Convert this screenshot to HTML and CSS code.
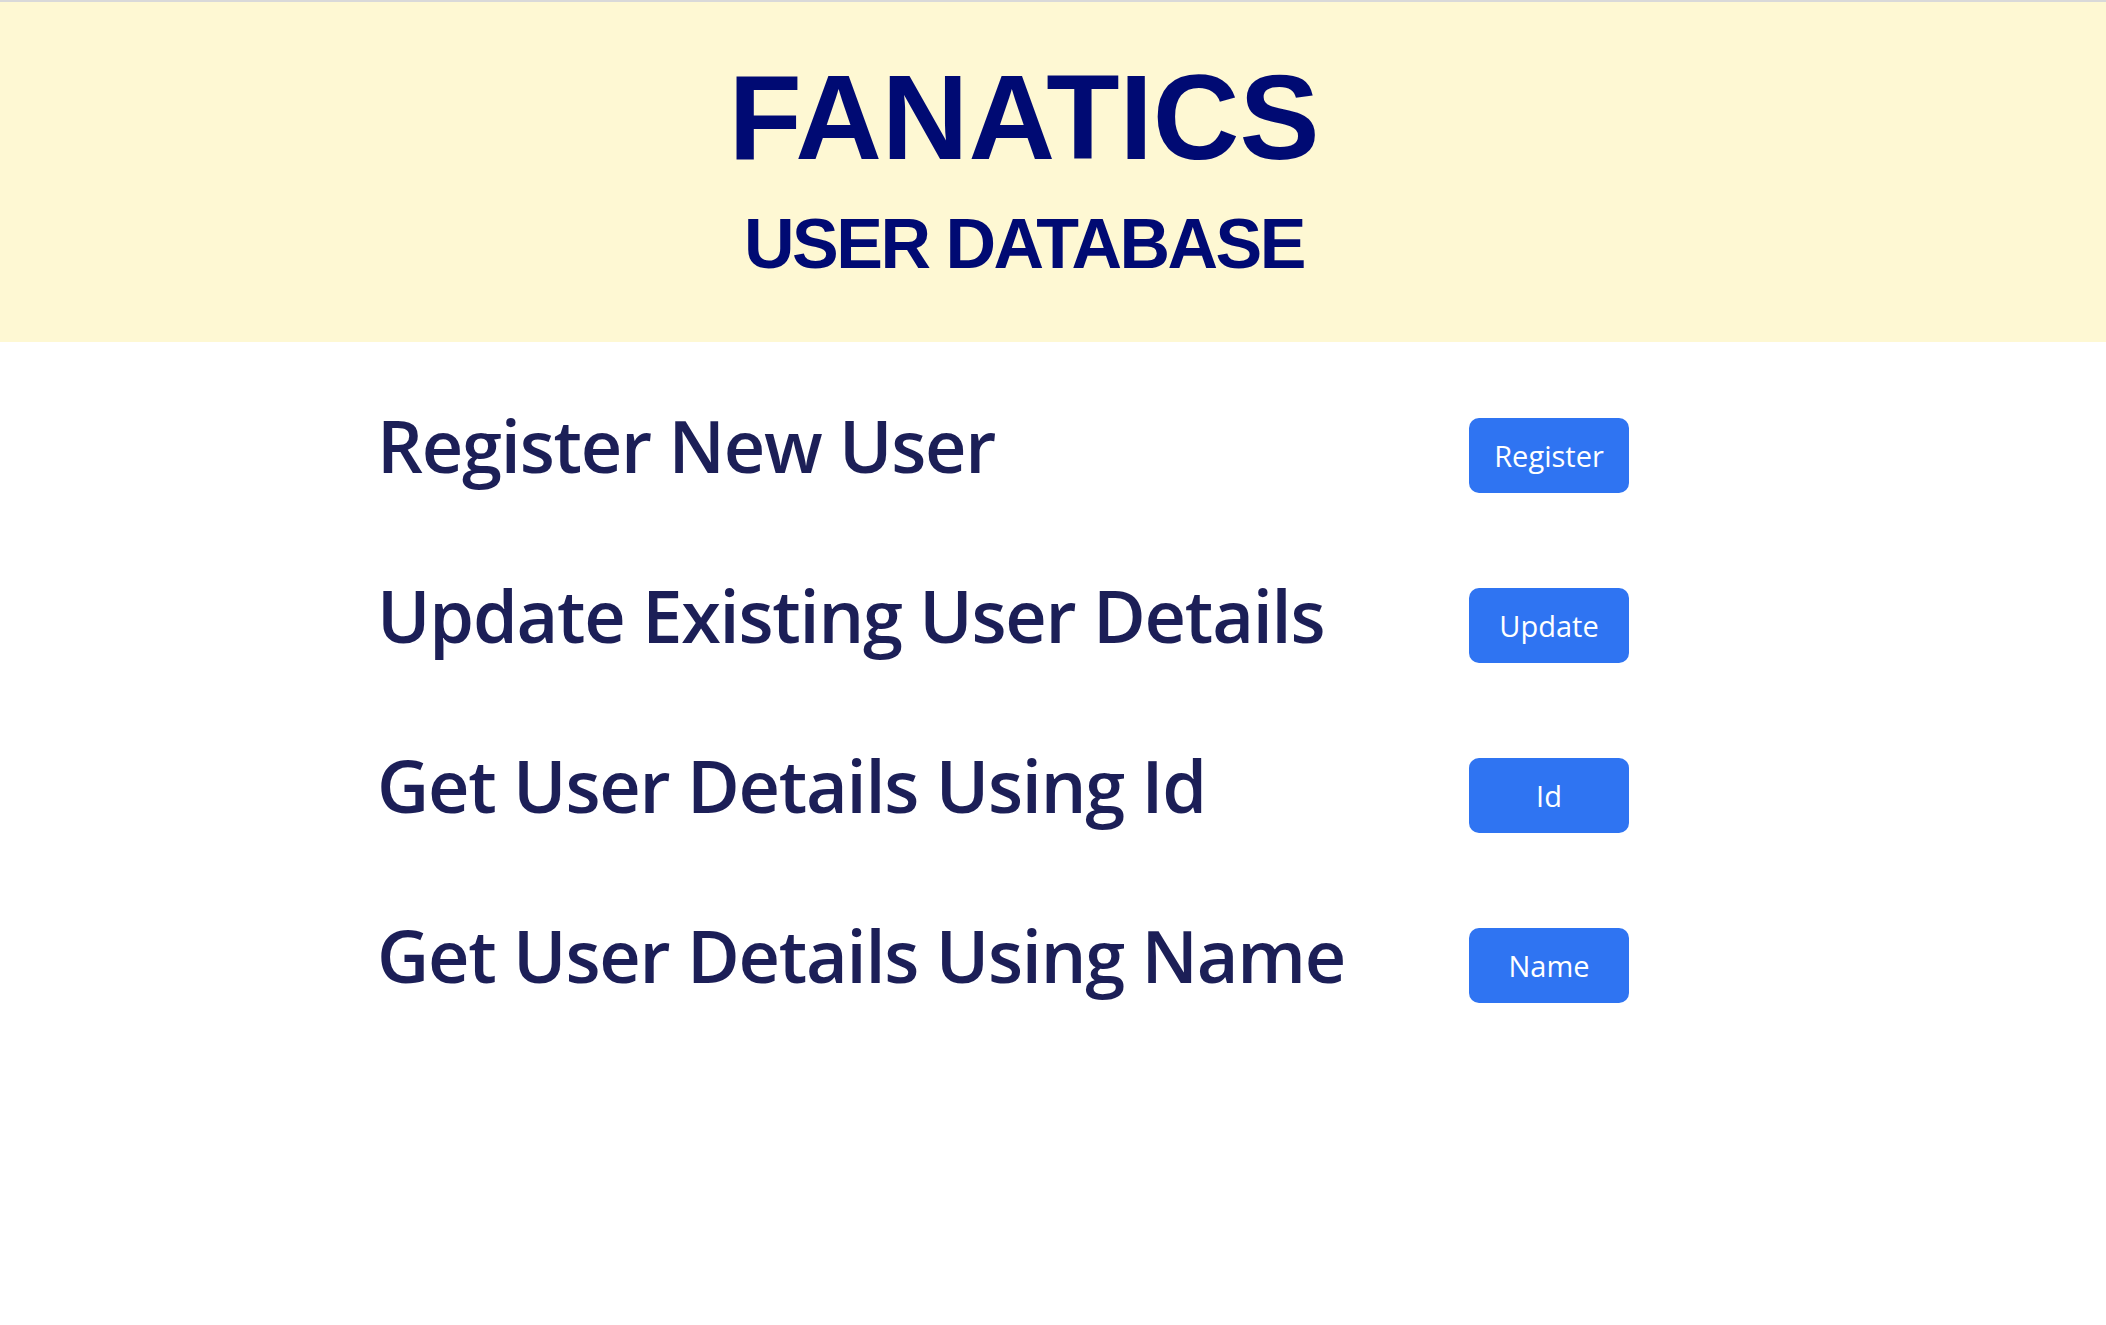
FILE: index.html
```html
<!DOCTYPE html>
<html lang="en">
<head>
<meta charset="utf-8">
<title>Fanatics - User Database</title>
<link rel="stylesheet" href="styles.css">
</head>
<body>
<header class="banner">
  <h1 class="brand">FANATICS</h1>
  <h2 class="subtitle">USER DATABASE</h2>
</header>
<main class="actions">
  <div class="action-row">
    <span class="action-label">Register New User</span>
    <button class="action-btn">Register</button>
  </div>
  <div class="action-row">
    <span class="action-label">Update Existing User Details</span>
    <button class="action-btn">Update</button>
  </div>
  <div class="action-row">
    <span class="action-label">Get User Details Using Id</span>
    <button class="action-btn">Id</button>
  </div>
  <div class="action-row">
    <span class="action-label">Get User Details Using Name</span>
    <button class="action-btn">Name</button>
  </div>
</main>
</body>
</html>
```

FILE: styles.css
```css
html, body {
  margin: 0;
  padding: 0;
  background: #ffffff;
}

body {
  border-top: 2px solid #d9d9d9;
  font-family: "Open Sans", "Liberation Sans", sans-serif;
}

.banner {
  background: #fef8d3;
  height: 340px;
  box-sizing: border-box;
  display: flex;
  flex-direction: column;
  align-items: center;
  padding-right: 58px;
  padding-top: 50px;
}

.brand {
  margin: 0;
  font-family: "Liberation Sans", Arial, sans-serif;
  font-weight: 700;
  font-size: 120px;
  line-height: 130px;
  letter-spacing: 0;
  color: #000a73;
}

.subtitle {
  margin: 0;
  margin-top: 22px;
  font-family: "Liberation Sans", Arial, sans-serif;
  font-weight: 700;
  font-size: 70px;
  line-height: 80px;
  letter-spacing: -2.5px;
  color: #000a73;
}

.actions {
  display: flex;
  flex-direction: column;
  gap: 95px;
  padding: 76px 0 0 377px;
}

.action-row {
  display: flex;
  align-items: flex-start;
  width: 1252px;
  height: 75px;
}

.action-label {
  flex: 1;
  font-size: 72px;
  font-weight: 600;
  line-height: 54px;
  letter-spacing: -1.2px;
  color: #1c1f57;
}

.action-btn {
  width: 160px;
  height: 75px;
  border: none;
  border-radius: 10px;
  background: #2f74f2;
  color: #ffffff;
  font-family: "Open Sans", "Liberation Sans", sans-serif;
  font-size: 29px;
  padding: 0;
}
```
